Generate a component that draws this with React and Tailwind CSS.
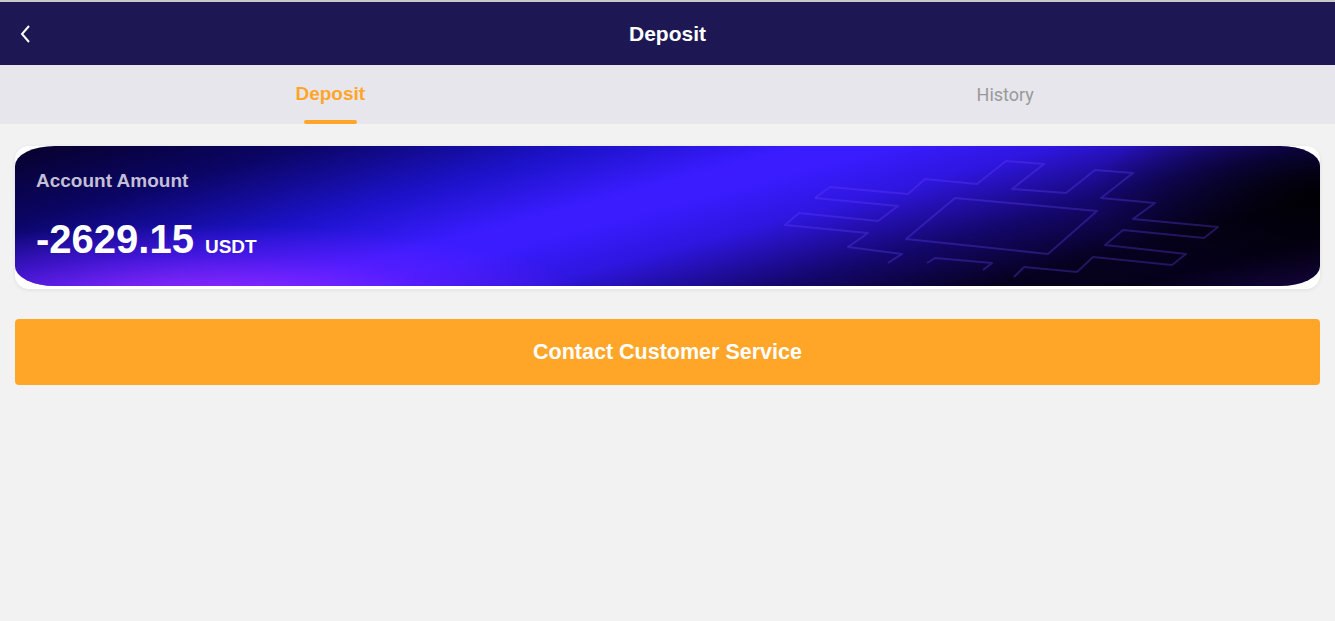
import { useState } from "react";

// circuit-like outline drawn over the balance card
const CircuitPattern = () => (
  <svg
    className="absolute inset-0 h-full w-full pointer-events-none"
    viewBox="0 0 1305 140"
    preserveAspectRatio="none"
    fill="none"
  >
    <g stroke="#6a44ff" strokeOpacity="0.3" strokeWidth="2" strokeLinejoin="round">
      <path d="M800 52 L815 41 L893 48 L910 33 L962 38 L991 15 L1029 18 L997 43 L1051 47 L1080 24 L1118 27 L1086 52 L1140 57 L1118 73 L1203 81 L1189 92 L1108 84 L1090 99 L1171 108 L1157 119 L1078 111 L1062 126" />
      <path d="M800 52 L883 60 L863 75 L784 67 L770 79 L853 87 L833 101 L887 108 L873 117" />
      <path d="M940 52 L1082 65 L1033 108 L891 93 Z" />
      <path d="M912 117 L920 112 L977 117 L968 124" />
      <path d="M999 131 L1009 121 L1062 126" />
    </g>
  </svg>
);

const App = () => {
  const [tab, setTab] = useState("deposit");

  return (
    <div className="min-h-[621px] bg-[#f2f2f2] font-['Liberation_Sans',Arial,sans-serif]">
      <div className="h-[2px] bg-[#c9c9c9]" />
      <header className="relative flex h-[63px] items-center justify-center bg-[#1d1854]">
        <button className="absolute left-[18px] top-1/2 -translate-y-1/2 text-white">
          <svg width="16" height="20" viewBox="0 0 16 20" fill="none">
            <path d="M11 2 L4 10 L11 18" stroke="white" strokeWidth="2" />
          </svg>
        </button>
        <h1 className="text-[21px] font-bold text-white">Deposit</h1>
      </header>

      <nav className="grid h-[59px] grid-cols-2 bg-[#e6e6ec]">
        <button
          onClick={() => setTab("deposit")}
          className="relative flex items-center justify-center"
        >
          <span
            className={
              tab === "deposit"
                ? "text-[19px] font-bold text-[#ffa629] -ml-[7px] -mt-[1px]"
                : "font-['Roboto',sans-serif] text-[18px] text-[#999999]"
            }
          >
            Deposit
          </span>
          {tab === "deposit" && (
            <span className="absolute bottom-[0px] left-1/2 h-[4px] w-[53px] -translate-x-[30px] rounded-full bg-[#ffa629]" />
          )}
        </button>
        <button
          onClick={() => setTab("history")}
          className="relative flex items-center justify-center"
        >
          <span
            className={
              tab === "history"
                ? "text-[19px] font-bold text-[#ffa629]"
                : "font-['Roboto',sans-serif] text-[18px] text-[#999999] ml-[8px] -mt-[1px]"
            }
          >
            History
          </span>
        </button>
      </nav>

      <div className="px-[15px] pt-[22px]">
        <div className="rounded-[14px] bg-white pb-[3px] shadow-[0_1px_4px_rgba(0,0,0,0.08)]">
          <div className="relative h-[140px] overflow-hidden rounded-[40px/20px] bg-[linear-gradient(165deg,#07012a_0%,#0b0566_16%,#1c12c8_31%,#3a1cff_43%,#3a1cff_48%,#2f16e0_57%,#14076e_70%,#06011e_82%,#05001a_90%,#14043c_100%)]">
            <div className="absolute inset-0 bg-[radial-gradient(ellipse_38%_70%_at_14%_112%,rgba(165,45,255,0.9),rgba(130,30,255,0.35)_50%,transparent_80%)]" />
            <div className="absolute inset-0 bg-[radial-gradient(ellipse_22%_80%_at_100%_35%,rgba(0,0,0,0.9),transparent_80%)]" />
            <CircuitPattern />
            <div className="relative px-[21px] pt-[25px]">
              <div className="text-[19px] font-bold leading-[20px] text-[#c3bfd6]">
                Account Amount
              </div>
              <div className="mt-[26px] flex items-baseline gap-[11px] text-white">
                <span className="text-[40px] font-bold leading-[44px]">
                  -2629.15
                </span>
                <span className="text-[19px] font-bold">USDT</span>
              </div>
            </div>
          </div>
        </div>

        <button className="mt-[30px] flex h-[66px] w-full items-center justify-center rounded-[4px] bg-[#ffa629] text-[21.5px] font-bold text-white">
          Contact Customer Service
        </button>
      </div>
    </div>
  );
};

export default App;
